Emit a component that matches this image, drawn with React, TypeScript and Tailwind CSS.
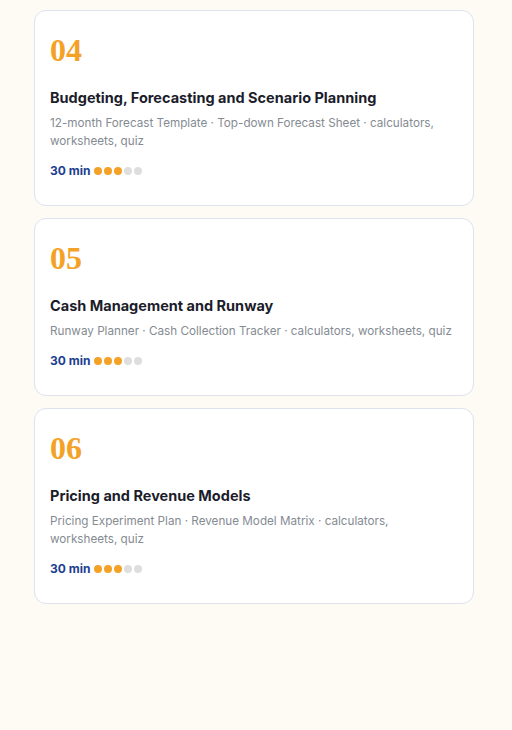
const modules = [
  {
    num: "04",
    title: "Budgeting, Forecasting and Scenario Planning",
    desc: "12-month Forecast Template · Top-down Forecast Sheet · calculators, worksheets, quiz",
    time: "30 min",
    level: 3,
  },
  {
    num: "05",
    title: "Cash Management and Runway",
    desc: "Runway Planner · Cash Collection Tracker · calculators, worksheets, quiz",
    time: "30 min",
    level: 3,
  },
  {
    num: "06",
    title: "Pricing and Revenue Models",
    desc: "Pricing Experiment Plan · Revenue Model Matrix · calculators, worksheets, quiz",
    time: "30 min",
    level: 3,
  },
];

function Difficulty({ level }: { level: number }) {
  return (
    <div className="flex items-center gap-[2px]">
      {[0, 1, 2, 3, 4].map((i) => (
        <span
          key={i}
          className={
            i < level
              ? "h-2 w-2 rounded-full bg-[#f4a227]"
              : "h-2 w-2 rounded-full bg-[#dedede]"
          }
        />
      ))}
    </div>
  );
}

function ModuleCard({ m }: { m: (typeof modules)[number] }) {
  return (
    <div className="rounded-xl border border-[#dde2ee] bg-white px-[15px] pt-[19px] pb-[26px]">
      <div className="font-['Liberation_Serif',serif] text-[32px] font-bold leading-[40px] text-[#f4a227]">
        {m.num}
      </div>
      <h3 className="mt-[18px] text-[14.5px] font-bold leading-5 text-[#1c1d2b]">{m.title}</h3>
      <p className="mt-[6px] text-[11.7px] leading-[18px] text-[#858b92]">{m.desc}</p>
      <div className="mt-[13px] flex items-center gap-1">
        <span className="text-[12px] font-bold leading-4 text-[#1d3f8f]">{m.time}</span>
        <Difficulty level={m.level} />
      </div>
    </div>
  );
}

export default function App() {
  return (
    <div className="min-h-[730px] bg-[#fdfbf4] font-['Inter',sans-serif]">
      <div className="ml-[34px] flex w-[440px] flex-col gap-3 pt-[10px]">
        {modules.map((m) => (
          <ModuleCard key={m.num} m={m} />
        ))}
      </div>
    </div>
  );
}
